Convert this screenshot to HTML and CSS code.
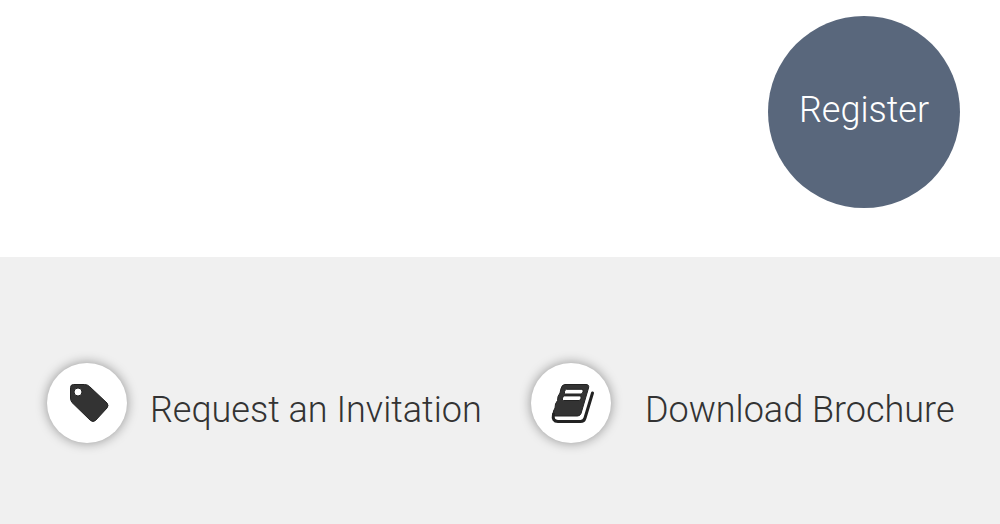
FILE: index.html
```html
<!DOCTYPE html>
<html lang="en">
<head>
<meta charset="utf-8">
<meta name="viewport" content="width=device-width, initial-scale=1">
<title>Register</title>
<link rel="stylesheet" href="styles.css">
</head>
<body>
<header class="hero">
  <a class="register" href="#register">Register</a>
</header>
<main class="actions">
  <a class="action" href="#invitation">
    <span class="badge">
      <svg class="icon" viewBox="0 0 42 42" aria-hidden="true">
        <path class="solid" fill-rule="evenodd" d="M7.500 2.500H18.500Q21.500 2.500 23.500 4.500L41 21Q43 23.500 41 26L29.500 38.500Q27 40.500 24.500 38.500L6 20.500Q4.500 18.500 4.500 16V5.500Q4.500 2.500 7.500 2.500ZM12 6A4 4 0 1 0 12 14A4 4 0 1 0 12 6Z"/>
      </svg>
    </span>
    <span class="label">Request an Invitation</span>
  </a>
  <a class="action action-wide" href="#brochure">
    <span class="badge">
      <svg class="icon" viewBox="0 0 42 42" aria-hidden="true">
        <path class="solid" fill-rule="evenodd" d="M15 2.500H36Q39.500 2.500 38.500 6L31 31.500Q30 34 27.500 34H3L3.500 29L5 26L5.500 22L7.500 18.500L8 14.500L10 11L11 6.500Q12 2.500 15 2.500ZM16.500 7.300Q15 7.300 14.500 9.700Q14 12 15.500 12H31Q32.500 12 33 9.700Q33.500 7.300 32 7.300ZM14.500 13.900Q13 13.900 12.500 16.200Q12 18.500 13.500 18.500H29Q30.500 18.500 31 16.200Q31.500 13.900 30 13.900Z"/>
        <path class="line" d="M3.500 32Q2 39.500 8 39.500H30.500Q34 39.500 35 36L42.500 11"/>
      </svg>
    </span>
    <span class="label">Download Brochure</span>
  </a>
</main>
</body>
</html>
```
FILE: styles.css
```css
* {
  box-sizing: border-box;
}

body {
  margin: 0;
  min-height: 100vh;
  display: flex;
  flex-direction: column;
  background: #fff;
  color: #333;
  font-family: Roboto, "Liberation Sans", sans-serif;
  font-size: 36px;
  font-weight: 300;
  line-height: 48px;
}

a {
  color: inherit;
  text-decoration: none;
}

.hero {
  display: flex;
  justify-content: flex-end;
  padding: 16px 40px 49px;
}

.register {
  display: flex;
  align-items: center;
  justify-content: center;
  width: 192px;
  height: 192px;
  padding-bottom: 4px;
  border-radius: 50%;
  background: #59677c;
  color: #fff;
}

.actions {
  flex: 1;
  display: grid;
  grid-template-columns: 53% 1fr;
  align-items: start;
  row-gap: 32px;
  padding: 106px 40px 64px 47px;
  background: #f0f0f0;
}

.action {
  display: flex;
  align-items: center;
  gap: 23px;
}

.action-wide {
  gap: 34px;
}

.badge {
  flex: none;
  display: flex;
  align-items: center;
  justify-content: center;
  width: 80px;
  height: 80px;
  border-radius: 50%;
  background: #fff;
  box-shadow: 0 0 12px rgba(0, 0, 0, 0.4);
}

.icon {
  width: 42px;
  height: 42px;
  overflow: visible;
}

.solid {
  fill: #333;
  stroke: #222;
  stroke-width: 1;
}

.line {
  fill: none;
  stroke: #222;
  stroke-width: 3;
  stroke-linecap: round;
}

.label {
  padding-top: 14px;
}

@media (max-width: 960px) {
  .actions {
    grid-template-columns: 1fr;
  }
}
```
